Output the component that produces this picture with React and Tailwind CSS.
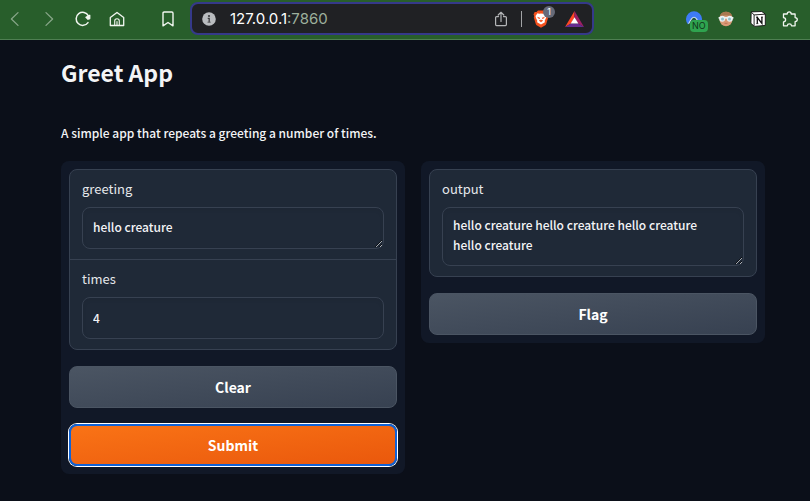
import React, { useState } from "react";

function IconButton({ label, children, className = "" }) {
  return (
    <button type="button" aria-label={label} className={`relative flex h-5 w-4 shrink-0 items-center justify-center ${className}`}>
      {children}
    </button>
  );
}

const line = { fill: "none", stroke: "currentColor", strokeLinecap: "round", strokeLinejoin: "round" };

function Back() {
  return (
    <svg width="16" height="16" viewBox="0 0 16 16" {...line} strokeWidth="1.3">
      <path d="M11 1.6 4.4 8l6.6 6.4" />
    </svg>
  );
}

function Forward() {
  return (
    <svg width="16" height="16" viewBox="0 0 16 16" {...line} strokeWidth="1.3">
      <path d="M5 1.6 11.6 8 5 14.4" />
    </svg>
  );
}

function Reload() {
  return (
    <svg width="16" height="16" viewBox="0 0 16 16" {...line} strokeWidth="1.5">
      <path d="M13 11.600A6.500 6.500 0 1 1 13.400 4.800" />
      <path d="M14.800 4.200v3.400l-1.800.7-2.100-2z" fill="currentColor" strokeWidth="1.200" />
    </svg>
  );
}

function Home() {
  return (
    <svg width="16" height="16" viewBox="0 0 16 16" {...line} strokeWidth="1.3">
      <path d="M1.300 6.600 8 1.400l6.700 5.200v7.900H1.300z" />
      <path d="M5.700 14.300V10a2.300 2.300 0 0 1 4.600 0v4.300M8 10.500v3.500" strokeWidth="1.100" />
    </svg>
  );
}

function Bookmark() {
  return (
    <svg width="16" height="16" viewBox="0 0 16 16" {...line} strokeWidth="1.4">
      <path d="M3 2.200Q3 1 4.200 1h7.600Q13 1 13 2.200v12.600l-5-3.300-5 3.300z" />
    </svg>
  );
}

function Info() {
  return (
    <svg width="14" height="14" viewBox="0 0 14 14" className="shrink-0">
      <circle cx="7" cy="7" r="6.800" fill="#b9bcbf" />
      <circle cx="7" cy="4" r="1.100" fill="#3a3b3e" />
      <path d="M5.700 6.400h1.500v3.800" fill="none" stroke="#3a3b3e" strokeWidth="1.300" />
      <path d="M5.500 10.200h3.200" fill="none" stroke="#5a5b5e" strokeWidth="1" />
    </svg>
  );
}

function Share() {
  return (
    <svg width="14" height="16" viewBox="0 0 14 16" {...line} strokeWidth="1.200">
      <path d="M4.500 5.600H2.600Q1.600 5.600 1.600 6.600v7q0 1 1 1h8.800q1 0 1-1v-7q0-1-1-1H9.500" />
      <path d="M7 10.500V1.500M4.200 4 7 1.300 9.800 4" />
    </svg>
  );
}

function Brave() {
  return (
    <svg width="16" height="18" viewBox="0 0 16 18">
      <path d="M5 .5h6l1.500 1.600 1.800-.2 1.200 2.700-.7 1.500.4 1.500-2 6.400q-.4 1-1.300 1.600L8 17.700l-3.900-2.100q-.9-.6-1.300-1.600l-2-6.400.4-1.500L.5 4.600l1.200-2.700 1.800.2z" fill="#f4511e" />
      <path d="m4.500 3.300 1.600.5L8 3.500l1.900.3 1.600-.5 2 2.700-.5 2-1.300 2.700.2 1.500L8 14.600l-3.900-2.400.2-1.500L3 8l-.5-2z" fill="#fff" />
      <path d="m4.600 7.200 2.200.7-.6 1zM11.400 7.200l-2.200.7.6 1zM6.200 10.600 8 9.900l1.800.7L8 12z" fill="#f4511e" stroke="#f4511e" strokeWidth=".500" />
    </svg>
  );
}

function Bat() {
  return (
    <svg width="19" height="16" viewBox="0 0 19 16">
      <path d="M9.500 0 0 16l6-3.600 3.500-6z" fill="#ff4724" />
      <path d="M9.500 0 19 16l-6-3.600-3.500-6z" fill="#9e1f63" />
      <path d="M0 16h19l-6-3.600H6z" fill="#662d91" />
      <path d="m9.500 6.200 3.900 6.200H5.600z" fill="#fff" />
    </svg>
  );
}

function Vpn() {
  return (
    <svg width="16" height="16" viewBox="0 0 16 16">
      <path d="M2 13.500A8 8 0 1 1 14 13.500L11 8.500Q8 4.500 5 8.500z" fill="#3e7bf7" />
      <path d="M2.500 12.800 5.500 7.900Q8 4.600 10.500 7.900l3 4.900" fill="none" stroke="#c9dcf5" strokeWidth="1.100" />
      <path d="M4.200 12.800 6.400 9Q8 7 9.600 9l2.200 3.800z" fill="#1f4a58" />
    </svg>
  );
}

function Face() {
  return (
    <svg width="16" height="16" viewBox="0 0 16 16">
      <ellipse cx="8" cy="8" rx="6.500" ry="7.300" fill="#d99a76" />
      <path d="M1.500 6.500Q2 .7 8 .7t6.500 5.800Q12 4 8 4.500 4 4 1.500 6.500z" fill="#a87850" />
      <path d="M.6 6h14.800v1.700H.6z" fill="#e9f1f2" />
      <circle cx="4.200" cy="7.800" r="3" fill="#e9f1f2" />
      <circle cx="11.800" cy="7.800" r="3" fill="#e9f1f2" />
      <circle cx="4.500" cy="7.900" r="1.500" fill="#8fc0cd" />
      <circle cx="11.500" cy="7.900" r="1.500" fill="#8fc0cd" />
      <path d="M6.500 12.300h3" stroke="#b8694c" strokeWidth=".800" />
    </svg>
  );
}

function Notion() {
  return (
    <svg width="16" height="16" viewBox="0 0 16 16">
      <path d="M1.200.9 11.800.5l3.500 2.600v11.300l-11 1L.9 12.300z" fill="#fff" stroke="#111" strokeWidth=".900" strokeLinejoin="round" />
      <path d="m1.400 1.300 2.700 2.600v11M4.100 3.900l11-.7" fill="none" stroke="#111" strokeWidth=".900" />
      <path d="M7.300 12.600V6.500l4.600 5.900V6.100" fill="none" stroke="#111" strokeWidth="1.300" />
      <path d="M6.200 6.500h1.600M11 6.100h2M6.300 12.600h2" fill="none" stroke="#111" strokeWidth=".800" />
    </svg>
  );
}

function Puzzle() {
  return (
    <svg width="16" height="16" viewBox="0 0 16 16" {...line} strokeWidth="1.300">
      <path d="M1.500 3H5.200C5.200 1.600 6 .8 7.200.8S9.200 1.600 9.200 3h3.900v3.600c1.400.1 2.200.9 2.200 2s-.8 1.900-2.200 2v4.200H9.500c-.1-1.200-.9-1.900-2.100-1.900s-2 .7-2.100 1.900H1.500v-3.900c1.300-.1 2.100-.9 2.100-2.100S2.800 6.800 1.500 6.700z" />
    </svg>
  );
}

function BrowserBar() {
  return (
    <header className="flex h-10 items-center border-b border-[#4f7f52] bg-[#285e2b] pb-0.5 pl-[7px] pr-3 text-[#f1f6f0]">
      <nav aria-label="Browser" className="flex items-center gap-[18px]">
        <IconButton label="Back" className="text-[#87a688]"><Back /></IconButton>
        <IconButton label="Forward" className="text-[#87a688]"><Forward /></IconButton>
        <IconButton label="Reload"><Reload /></IconButton>
        <IconButton label="Home"><Home /></IconButton>
      </nav>
      <IconButton label="Bookmark" className="ml-[35px]"><Bookmark /></IconButton>
      <div className="ml-[14px] mr-[92px] flex h-[33px] min-w-0 flex-1 items-center rounded-lg border-2 border-[#35398a] bg-[#202124] pl-2.5 pr-2">
        <Info />
        <div className="ml-3.5 flex-1 font-['Inter',sans-serif] text-[15px] leading-5 text-white">
          127.0.0.1<span className="text-[#9db09d]">:7860</span>
        </div>
        <IconButton label="Share" className="text-[#b4b6b8]"><Share /></IconButton>
        <div className="ml-3 h-4 w-px bg-[#a2a4a6]" />
        <IconButton label="Shields" className="ml-[11px]">
          <Brave />
          <span className="absolute -top-[3px] left-2.5 flex h-3 w-3 items-center justify-center rounded-full bg-[#666a78] font-['Inter',sans-serif] text-[9px] leading-3 text-white">1</span>
        </IconButton>
        <button type="button" aria-label="Rewards" className="ml-4"><Bat /></button>
      </div>
      <div className="flex items-center gap-4">
        <IconButton label="VPN">
          <Vpn />
          <span className="absolute left-1 top-[11px] flex h-3 items-center rounded-sm bg-[#2fa34f] px-[2px] font-['Inter',sans-serif] text-[9px] leading-3 text-[#10351a]">NO</span>
        </IconButton>
        <IconButton label="Profile"><Face /></IconButton>
        <IconButton label="Notion"><Notion /></IconButton>
        <IconButton label="Extensions"><Puzzle /></IconButton>
      </div>
    </header>
  );
}

const fieldClass =
  "block w-full rounded-lg border border-[#374151] bg-[#1f2937] pl-2.5 pr-5 text-xs font-medium leading-5 text-[#f3f4f6] shadow-[inset_0_2px_4px_0_rgba(0,0,0,0.05)] outline-none";
const labelClass = "mb-2 block text-[13px] leading-5 text-[#e5e7eb]";
const greyButton =
  "h-[42px] w-full rounded-lg border border-[#4b5563] bg-linear-to-br from-[#4b5563] to-[#374151] text-sm font-bold leading-6 text-white";

function Panel({ children }) {
  return <section className="flex min-w-0 flex-1 flex-col gap-4 rounded-lg bg-[#111827] p-2">{children}</section>;
}

function Field({ id, label, children }) {
  return (
    <div className="px-3 pb-2.5 pt-[9px]">
      <label htmlFor={id} className={labelClass}>{label}</label>
      {children}
    </div>
  );
}

export default function App() {
  const [greeting, setGreeting] = useState("hello creature");
  const [times, setTimes] = useState("4");
  const [output, setOutput] = useState("hello creature hello creature hello creature hello creature");

  return (
    <div className="min-h-screen bg-[#0b0f19] font-['Noto_Sans_CJK_SC',sans-serif] text-[#f3f4f6]">
      <BrowserBar />
      <main className="pb-7 pl-[61px] pr-[45px] pt-3.5">
        <h1 className="text-[23px] font-bold leading-9">Greet App</h1>
        <p className="mb-[18px] mt-[33px] text-xs font-medium leading-5">A simple app that repeats a greeting a number of times.</p>
        <div className="flex items-start gap-4">
          <Panel>
            <div className="divide-y divide-[#374151] rounded-lg border border-[#374151] bg-[#1f2937]">
              <Field id="greeting" label="greeting">
                <textarea id="greeting" rows={1} value={greeting} onChange={(e) => setGreeting(e.target.value)} className={`${fieldClass} h-[42px] resize-y overflow-hidden py-[9px]`} />
              </Field>
              <Field id="times" label="times">
                <input id="times" value={times} onChange={(e) => setTimes(e.target.value)} className={`${fieldClass} h-[42px] pb-0.5`} />
              </Field>
            </div>
            <button type="button" onClick={() => { setGreeting(""); setTimes(""); setOutput(""); }} className={greyButton}>Clear</button>
            <button
              type="button"
              onClick={() => setOutput(Array(Number(times) || 0).fill(greeting).join(" "))}
              className="h-[42px] w-full rounded-lg border-2 border-[#0f62d6] bg-linear-to-br from-[#f97316] to-[#ea580c] text-sm font-bold leading-6 text-white ring-1 ring-white"
            >
              Submit
            </button>
          </Panel>
          <Panel>
            <div className="rounded-lg border border-[#374151] bg-[#1f2937]">
              <Field id="output" label="output">
                <textarea id="output" readOnly value={output} className={`${fieldClass} h-[59px] resize-y overflow-hidden py-[7px]`} />
              </Field>
            </div>
            <button type="button" className={greyButton}>Flag</button>
          </Panel>
        </div>
      </main>
    </div>
  );
}
